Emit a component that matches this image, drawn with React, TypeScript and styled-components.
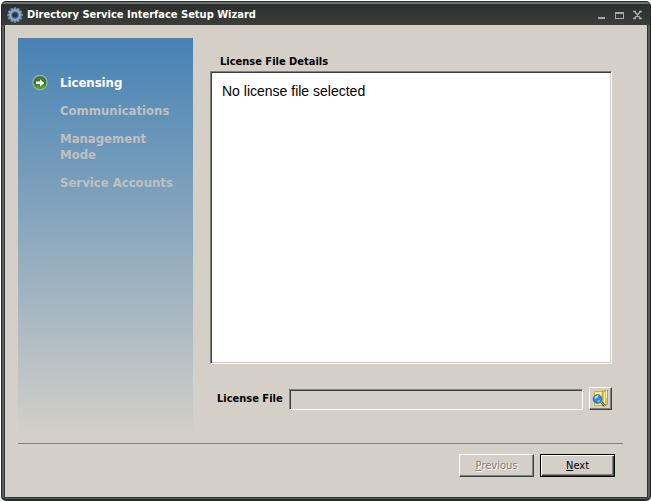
import React from "react";
import styled, { createGlobalStyle } from "styled-components";

const face = "#d4d0c8";
const uiFont = `Tahoma, "DejaVu Sans Condensed", "DejaVu Sans", sans-serif`;

const GlobalStyle = createGlobalStyle`
  *, *::before, *::after { box-sizing: border-box; }
  body { margin: 0; background: #fff; font-family: ${uiFont}; font-size: 11px; color: #000; }
`;

const WindowFrame = styled.main`
  display: flex;
  flex-direction: column;
  min-height: calc(100vh - 1px);
  margin: 1px 0 0 1px;
  border: 1px solid #252a2a;
  border-bottom-width: 2px;
  border-radius: 5px;
  background: #5a5c5c;
  overflow: hidden;
`;

const TitleBar = styled.header`
  display: flex;
  align-items: center;
  height: 23px;
  padding: 0 3px 0 5px;
  border-top: 2px solid #717372;
  background: linear-gradient(#2c2f2e, #3b3d3b);
  color: #fff;
`;

const Title = styled.h1`
  flex: 1;
  margin: 0 0 0 4px;
  font-size: 11px;
  line-height: 16px;
  font-weight: bold;
  white-space: nowrap;
`;

const CaptionButton = styled.button`
  display: flex;
  width: 18px;
  height: 16px;
  padding: 0;
  align-items: center;
  justify-content: center;
  border: 0;
  background: none;
  color: #a6a8ab;
`;

const Client = styled.div`
  flex: 1;
  display: flex;
  flex-direction: column;
  margin: 0 2px 1px;
  border: solid #303433;
  border-width: 0 1px 1px;
  padding: 13px 24px 20px 13px;
  background: ${face};
`;

const Content = styled.div`
  flex: 1;
  display: flex;
  gap: 17px;
  padding-bottom: 6px;
  border-bottom: 1px solid #808080;
`;

const Sidebar = styled.nav`
  flex: 0 0 175px;
  padding: 37px 16px 0 14px;
  background: linear-gradient(#4682b4, ${face});
`;

const Steps = styled.ol`
  display: flex;
  flex-direction: column;
  gap: 12px;
  margin: 0;
  padding: 0;
  list-style: none;
`;

const Step = styled.li<{ $active?: boolean }>`
  display: grid;
  grid-template-columns: 16px 1fr;
  column-gap: 12px;
  font-size: 13px;
  line-height: 16px;
  font-weight: bold;
  color: ${(p) => (p.$active ? "#fff" : "#c0c0c0")};
`;

const StepText = styled.span`
  grid-column: 2;
`;

const Pane = styled.section`
  flex: 1;
  min-width: 0;
  display: flex;
  flex-direction: column;
  padding: 16px 11px 27px 0;
`;

const Heading = styled.h2`
  margin: 0 0 1px 10px;
  font-size: 11px;
  line-height: 16px;
  font-weight: bold;
`;

const Details = styled.div`
  flex: 1;
  padding: 11px;
  border: 1px solid;
  border-color: #808080 #fff #fff #808080;
  background: #fff;
  box-shadow: inset 1px 1px #404040, inset -1px -1px ${face};
  font-family: "Liberation Sans", Arial, sans-serif;
  font-size: 14px;
  line-height: 16px;
`;

const FileRow = styled.div`
  display: flex;
  align-items: flex-end;
  margin-top: 23px;
  padding-left: 7px;
`;

const FileLabel = styled.label`
  flex: 0 0 72px;
  line-height: 23px;
  font-weight: bold;
  white-space: nowrap;
`;

const FileInput = styled.input`
  flex: 1;
  min-width: 0;
  height: 21px;
  margin-right: 6px;
  padding: 0 3px;
  border: 1px solid;
  border-color: #808080 #fff #fff #808080;
  border-radius: 0;
  outline: 0;
  background: ${face};
  box-shadow: inset 1px 1px #404040;
  font: inherit;
`;

const BevelButton = styled.button`
  display: flex;
  align-items: center;
  justify-content: center;
  width: 75px;
  height: 23px;
  padding: 0;
  border: 1px solid;
  border-color: #fff #404040 #404040 #fff;
  border-radius: 0;
  background: ${face};
  box-shadow: inset -1px -1px #808080;
  color: #000;
  font: 11px ${uiFont};
  &:disabled {
    color: #808080;
    text-shadow: 1px 1px #fff;
  }
`;

const BrowseButton = styled(BevelButton)`
  width: 23px;
`;

const DefaultButton = styled(BevelButton)`
  border-color: #000;
  box-shadow: inset 1px 1px #fff, inset -1px -1px #404040, inset -2px -2px #808080;
`;

const Footer = styled.footer`
  display: flex;
  justify-content: flex-end;
  gap: 6px;
  padding: 10px 8px 0 0;
`;

const GearIcon = () => (
  <svg width="16" height="16" viewBox="0 0 16 16" aria-hidden="true">
    <g fill="#7590b4">
      {[0, 30, 60, 90, 120, 150].map((a) => (
        <rect key={a} x="6.6" y="0.3" width="2.8" height="15.4" rx="1" transform={`rotate(${a} 8 8)`} />
      ))}
    </g>
    <circle cx="8" cy="8" r="4.6" fill="#3f5f90" stroke="#8facd4" strokeWidth="2.4" />
    <circle cx="8" cy="8" r="3.2" fill="none" stroke="#58749f" strokeWidth="1.2" />
    <circle cx="8" cy="8" r="2.6" fill="#2d3236" />
  </svg>
);

const ArrowIcon = () => (
  <svg width="16" height="16" viewBox="0 0 16 16" aria-hidden="true">
    <defs>
      <linearGradient id="arrowGreen" x1="0" y1="0" x2="0" y2="1">
        <stop offset="0" stopColor="#467a5c" />
        <stop offset="0.5" stopColor="#2f7a2c" />
        <stop offset="1" stopColor="#66b82a" />
      </linearGradient>
    </defs>
    <circle cx="8" cy="7.6" r="7.2" fill="url(#arrowGreen)" stroke="#a5aca5" strokeWidth="1.2" />
    <path d="M4 6.6h4V4.2L12.4 8 8 11.6V9H4z" fill="#fff" />
  </svg>
);

const BrowseIcon = () => (
  <svg width="17" height="17" viewBox="0 0 17 17" aria-hidden="true">
    <path d="M2.5 1.5h9v14h-9z" fill="#fae991" stroke="#d9ad35" />
    <path d="M10.5 1l5-.5v14l-5 1.5z" fill="#e6bd45" stroke="#d1a02b" />
    <path d="M12.5 2v13" stroke="#fff3ad" />
    <path d="M14.5 1v7" stroke="#fffbe2" />
    <path d="M9 12l4 4" stroke="#264e6a" strokeWidth="2.4" />
    <path d="M9 12l4 4" stroke="#8fc6d4" />
    <circle cx="5.5" cy="9" r="4.3" fill="#3486d8" stroke="#2567aa" />
    <path d="M2.5 9a3.2 3.2 0 0 1 4-3.6L5.5 8z" fill="#9fdcff" />
    <path d="M5 11.5L8.5 9l-.5 2.5-2 1z" fill="#53dbe5" />
  </svg>
);

const steps = ["Licensing", "Communications", "Management Mode", "Service Accounts"];

export default function App() {
  return (
    <>
      <GlobalStyle />
      <WindowFrame>
        <TitleBar>
          <GearIcon />
          <Title>Directory Service Interface Setup Wizard</Title>
          <CaptionButton type="button" aria-label="Minimize">
            <svg width="10" height="10" viewBox="0 0 10 10"><path d="M1 7h7v2H1z" fill="currentColor" /></svg>
          </CaptionButton>
          <CaptionButton type="button" aria-label="Maximize">
            <svg width="10" height="10" viewBox="0 0 10 10" shapeRendering="crispEdges">
              <path d="M0.5 2.5h8v6h-8z" fill="none" stroke="currentColor" />
              <path d="M0 2h9v2H0z" fill="currentColor" />
            </svg>
          </CaptionButton>
          <CaptionButton type="button" aria-label="Close">
            <svg width="10" height="10" viewBox="0 0 10 10">
              <path d="M0 1.5h3M6 1.5h3M0 8.5h3M6 8.5h3M1.5 1.5l6 7M7.5 1.5l-6 7" fill="none" stroke="currentColor" strokeWidth="1.6" />
            </svg>
          </CaptionButton>
        </TitleBar>
        <Client>
          <Content>
            <Sidebar aria-label="Setup steps">
              <Steps>
                {steps.map((step, i) => (
                  <Step key={step} $active={i === 0} aria-current={i === 0 ? "step" : undefined}>
                    {i === 0 && <ArrowIcon />}
                    <StepText>{step}</StepText>
                  </Step>
                ))}
              </Steps>
            </Sidebar>
            <Pane>
              <Heading>License File Details</Heading>
              <Details>No license file selected</Details>
              <FileRow>
                <FileLabel htmlFor="license-file">License File</FileLabel>
                <FileInput id="license-file" type="text" readOnly />
                <BrowseButton type="button" aria-label="Browse for license file">
                  <BrowseIcon />
                </BrowseButton>
              </FileRow>
            </Pane>
          </Content>
          <Footer>
            <BevelButton type="button" disabled>
              <span><u>P</u>revious</span>
            </BevelButton>
            <DefaultButton type="button">
              <span><u>N</u>ext</span>
            </DefaultButton>
          </Footer>
        </Client>
      </WindowFrame>
    </>
  );
}
